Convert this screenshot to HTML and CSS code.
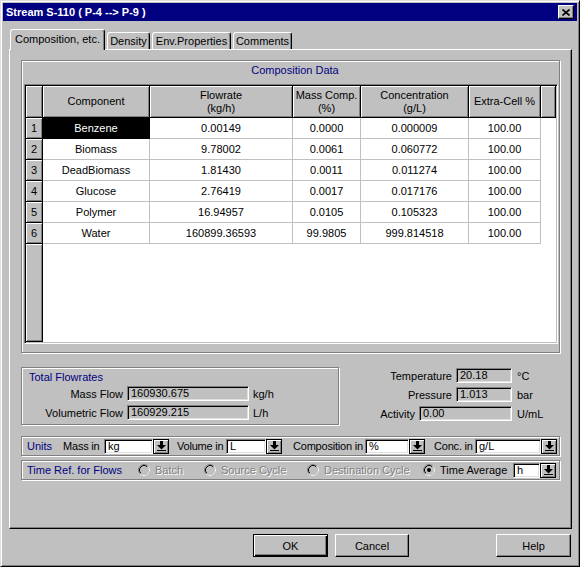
FILE: index.html
```html
<!DOCTYPE html>
<html lang="en">
<head>
  <meta charset="UTF-8" />
  <title>Stream S-110</title>
  <link rel="stylesheet" href="styles.css">
</head>
<body>
  <div class="window">
    <div class="titlebar">
      <span class="title">Stream S-110 ( P-4 --&gt; P-9 )</span>
      <button class="close-btn">
        <svg width="8" height="7" viewBox="0 0 8 7"><path d="M0.5 0.5L7.5 6.5M7.5 0.5L0.5 6.5" stroke="#000" stroke-width="1.6"/></svg>
      </button>
    </div>

    <div class="tabs">
      <div class="tab active tab-comp">Composition, etc.</div>
      <div class="tab tab-density">Density</div>
      <div class="tab tab-env">Env.Properties</div>
      <div class="tab tab-comments">Comments</div>
    </div>

    <div class="panel">
      <div class="group comp-group">
        <div class="group-title comp-title">Composition Data</div>
        <div class="grid">
          <div class="grid-row head">
            <div class="rh"></div>
            <div class="hc">Component</div>
            <div class="hc">Flowrate<br>(kg/h)</div>
            <div class="hc">Mass Comp.<br>(%)</div>
            <div class="hc">Concentration<br>(g/L)</div>
            <div class="hc">Extra-Cell %</div>
            <div class="hc"></div>
          </div>
          <div class="grid-row">
            <div class="rh">1</div>
            <div class="cell sel">Benzene</div>
            <div class="cell">0.00149</div>
            <div class="cell">0.0000</div>
            <div class="cell">0.000009</div>
            <div class="cell">100.00</div>
            <div class="cell blank"></div>
          </div>
          <div class="grid-row">
            <div class="rh">2</div>
            <div class="cell">Biomass</div>
            <div class="cell">9.78002</div>
            <div class="cell">0.0061</div>
            <div class="cell">0.060772</div>
            <div class="cell">100.00</div>
            <div class="cell blank"></div>
          </div>
          <div class="grid-row">
            <div class="rh">3</div>
            <div class="cell">DeadBiomass</div>
            <div class="cell">1.81430</div>
            <div class="cell">0.0011</div>
            <div class="cell">0.011274</div>
            <div class="cell">100.00</div>
            <div class="cell blank"></div>
          </div>
          <div class="grid-row">
            <div class="rh">4</div>
            <div class="cell">Glucose</div>
            <div class="cell">2.76419</div>
            <div class="cell">0.0017</div>
            <div class="cell">0.017176</div>
            <div class="cell">100.00</div>
            <div class="cell blank"></div>
          </div>
          <div class="grid-row">
            <div class="rh">5</div>
            <div class="cell">Polymer</div>
            <div class="cell">16.94957</div>
            <div class="cell">0.0105</div>
            <div class="cell">0.105323</div>
            <div class="cell">100.00</div>
            <div class="cell blank"></div>
          </div>
          <div class="grid-row">
            <div class="rh">6</div>
            <div class="cell">Water</div>
            <div class="cell">160899.36593</div>
            <div class="cell">99.9805</div>
            <div class="cell">999.814518</div>
            <div class="cell">100.00</div>
            <div class="cell blank"></div>
          </div>
          <div class="grid-rest">
            <div class="rh"></div>
          </div>
        </div>
      </div>

      <div class="flows">
        <div class="group total-group">
          <div class="group-title">Total Flowrates</div>
          <div class="flow-row first">
            <span class="flow-label">Mass Flow</span>
            <span class="field flow-field">160930.675</span>
            <span class="flow-unit">kg/h</span>
          </div>
          <div class="flow-row">
            <span class="flow-label">Volumetric Flow</span>
            <span class="field flow-field">160929.215</span>
            <span class="flow-unit">L/h</span>
          </div>
        </div>
        <div class="props">
          <div class="prop-row">
            <span class="prop-label">Temperature</span>
            <span class="field short">20.18</span>
            <span class="prop-unit">°C</span>
          </div>
          <div class="prop-row">
            <span class="prop-label">Pressure</span>
            <span class="field short">1.013</span>
            <span class="prop-unit">bar</span>
          </div>
          <div class="prop-row">
            <span class="prop-label">Activity</span>
            <span class="field long">0.00</span>
            <span class="prop-unit">U/mL</span>
          </div>
        </div>
      </div>

      <div class="group bar units-bar">
        <span class="bar-title w-units">Units</span>
        <span class="lbl w-mass">Mass in</span>
        <div class="combo">
          <span class="combo-edit e-mass">kg</span>
          <span class="combo-btn"><svg width="9" height="10" viewBox="0 0 9 10"><rect x="3" y="0" width="3" height="4"/><polygon points="0,4 9,4 4.5,8.5"/><rect x="0" y="9" width="9" height="1"/></svg></span>
        </div>
        <span class="lbl w-volume">Volume in</span>
        <div class="combo">
          <span class="combo-edit e-volume">L</span>
          <span class="combo-btn"><svg width="9" height="10" viewBox="0 0 9 10"><rect x="3" y="0" width="3" height="4"/><polygon points="0,4 9,4 4.5,8.5"/><rect x="0" y="9" width="9" height="1"/></svg></span>
        </div>
        <span class="lbl w-comp">Composition in</span>
        <div class="combo">
          <span class="combo-edit e-comp">%</span>
          <span class="combo-btn"><svg width="9" height="10" viewBox="0 0 9 10"><rect x="3" y="0" width="3" height="4"/><polygon points="0,4 9,4 4.5,8.5"/><rect x="0" y="9" width="9" height="1"/></svg></span>
        </div>
        <span class="lbl w-conc">Conc. in</span>
        <div class="combo">
          <span class="combo-edit e-conc">g/L</span>
          <span class="combo-btn"><svg width="9" height="10" viewBox="0 0 9 10"><rect x="3" y="0" width="3" height="4"/><polygon points="0,4 9,4 4.5,8.5"/><rect x="0" y="9" width="9" height="1"/></svg></span>
        </div>
      </div>

      <div class="group bar time-bar">
        <span class="bar-title w-time">Time Ref. for Flows</span>
        <label class="radio disabled r-batch">
          <svg width="12" height="12" viewBox="0 0 12 12"><circle cx="6" cy="6" r="5.5" fill="#c0c0c0" stroke="#808080"/><path d="M9.89 2.11A5.5 5.5 0 0 1 2.11 9.89" fill="none" stroke="#fff"/><path d="M2.82 9.18A4.5 4.5 0 0 1 9.18 2.82" fill="none" stroke="#000"/></svg>
          <span>Batch</span>
        </label>
        <label class="radio disabled r-source">
          <svg width="12" height="12" viewBox="0 0 12 12"><circle cx="6" cy="6" r="5.5" fill="#c0c0c0" stroke="#808080"/><path d="M9.89 2.11A5.5 5.5 0 0 1 2.11 9.89" fill="none" stroke="#fff"/><path d="M2.82 9.18A4.5 4.5 0 0 1 9.18 2.82" fill="none" stroke="#000"/></svg>
          <span>Source Cycle</span>
        </label>
        <label class="radio disabled r-dest">
          <svg width="12" height="12" viewBox="0 0 12 12"><circle cx="6" cy="6" r="5.5" fill="#c0c0c0" stroke="#808080"/><path d="M9.89 2.11A5.5 5.5 0 0 1 2.11 9.89" fill="none" stroke="#fff"/><path d="M2.82 9.18A4.5 4.5 0 0 1 9.18 2.82" fill="none" stroke="#000"/></svg>
          <span>Destination Cycle</span>
        </label>
        <label class="radio r-avg">
          <svg width="12" height="12" viewBox="0 0 12 12"><circle cx="6" cy="6" r="5.5" fill="#c0c0c0" stroke="#808080"/><path d="M9.89 2.11A5.5 5.5 0 0 1 2.11 9.89" fill="none" stroke="#fff"/><path d="M2.82 9.18A4.5 4.5 0 0 1 9.18 2.82" fill="none" stroke="#000"/><circle cx="6" cy="6" r="2" fill="#000"/></svg>
          <span>Time Average</span>
        </label>
        <div class="combo">
          <span class="combo-edit e-time">h</span>
          <span class="combo-btn"><svg width="9" height="10" viewBox="0 0 9 10"><rect x="3" y="0" width="3" height="4"/><polygon points="0,4 9,4 4.5,8.5"/><rect x="0" y="9" width="9" height="1"/></svg></span>
        </div>
      </div>
    </div>

    <div class="buttons">
      <button class="btn default">OK</button>
      <button class="btn cancel">Cancel</button>
      <button class="btn help">Help</button>
    </div>
  </div>
</body>
</html>
```

FILE: styles.css
```css
* {
  box-sizing: border-box;
}
body {
  margin: 0;
  background-color: #c0c0c0;
  font-family: "Liberation Sans", Arial, sans-serif;
  font-size: 11px;
  color: #000;
}
.window {
  width: 580px;
  height: 567px;
  background-color: #c0c0c0;
  border: 1px solid;
  border-color: #dfdfdf #000 #000 #dfdfdf;
  box-shadow: inset 1px 1px #fff, inset -1px -1px #808080;
  padding: 2px;
}

/* title bar */
.titlebar {
  height: 18px;
  background-color: #000080;
  display: flex;
  align-items: center;
  justify-content: space-between;
  padding: 0 3px 0 3px;
}
.title {
  color: #fff;
  font-weight: bold;
  font-size: 11px;
}
.close-btn {
  width: 16px;
  height: 14px;
  padding: 0;
  background-color: #c0c0c0;
  border: 1px solid;
  border-color: #fff #000 #000 #fff;
  box-shadow: inset -1px -1px #808080;
  display: flex;
  align-items: center;
  justify-content: center;
}

/* tabs */
.tabs {
  display: flex;
  align-items: flex-end;
  height: 20px;
  margin-top: 8px;
  padding-left: 7px;
}
.tab {
  height: 17px;
  background-color: #c0c0c0;
  border-top: 1px solid #fff;
  border-left: 1px solid #fff;
  border-right: 1px solid #000;
  box-shadow: inset -1px 0 #808080;
  border-radius: 3px 3px 0 0;
  text-align: center;
  line-height: 16px;
  white-space: nowrap;
}
.tab.active {
  height: 21px;
  margin-bottom: -1px;
  position: relative;
  z-index: 1;
  line-height: 19px;
}
.tab-comp { width: 95px; }
.tab-density { width: 43px; margin-left: 2px; }
.tab-env { width: 79px; margin-left: 2px; }
.tab-comments { width: 59px; margin-left: 2px; }

/* page panel */
.panel {
  margin-left: 6px;
  width: 563px;
  height: 480px;
  border: 1px solid;
  border-color: #fff #000 #000 #fff;
  box-shadow: inset -1px -1px #808080;
  padding: 10px 0 0 11px;
}
.group {
  border: 1px solid #808080;
  box-shadow: 1px 1px 0 #fff, inset 1px 1px 0 #fff;
}
.group-title {
  color: #000080;
  line-height: 13px;
}
.comp-group {
  width: 539px;
  height: 293px;
  padding-left: 2px;
}
.comp-title {
  height: 23px;
  padding-top: 3px;
  padding-left: 7px;
  text-align: center;
}

/* data grid */
.grid {
  width: 534px;
  height: 260px;
  border: 1px solid;
  border-color: #808080 #fff #fff #808080;
  box-shadow: inset 1px 1px #000, inset -1px -1px #c0c0c0;
  padding: 1px;
  background-color: #fff;
  display: flex;
  flex-direction: column;
}
.grid-row {
  display: grid;
  grid-template-columns: 17px 107px 143px 68px 108px 72px 15px;
  height: 21px;
}
.grid-row.head {
  height: 32px;
}
.hc,
.rh {
  background-color: #c0c0c0;
  border-right: 1px solid #000;
  border-bottom: 1px solid #000;
  box-shadow: inset 1px 1px #fff, inset -1px -1px #808080;
  display: flex;
  align-items: center;
  justify-content: center;
  text-align: center;
  line-height: 13px;
}
.cell {
  border-right: 1px solid #c0c0c0;
  border-bottom: 1px solid #c0c0c0;
  display: flex;
  align-items: center;
  justify-content: center;
  white-space: nowrap;
}
.cell.sel {
  background-color: #000;
  border-color: #000;
  color: #fff;
}
.cell.blank {
  border: none;
}
.grid-rest {
  flex: 1;
  display: grid;
  grid-template-columns: 17px;
}

/* flowrates and properties */
.flows {
  display: flex;
  width: 539px;
  margin-top: 14px;
}
.total-group {
  width: 318px;
  height: 58px;
  padding: 3px 0 0 7px;
}
.flow-row {
  display: flex;
  align-items: center;
  height: 15px;
  margin-top: 4px;
}
.flow-row.first {
  margin-top: 2px;
}
.flow-label {
  width: 94px;
  text-align: right;
  margin-right: 4px;
  white-space: nowrap;
}
.flow-unit {
  margin-left: 4px;
}
.field {
  height: 15px;
  background-color: #c0c0c0;
  border: 1px solid;
  border-color: #808080 #fff #fff #808080;
  box-shadow: inset 1px 1px #000, inset -1px -1px #dfdfdf;
  padding-left: 3px;
  line-height: 13px;
}
.flow-field { width: 122px; }
.field.short { width: 56px; }
.field.long { width: 93px; }
.props {
  flex: 1;
  margin-top: 1px;
  display: flex;
  flex-direction: column;
  gap: 4px;
}
.prop-row {
  display: flex;
  align-items: center;
  justify-content: flex-end;
  height: 15px;
}
.prop-label {
  margin-right: 4px;
}
.prop-unit {
  width: 48px;
  padding-left: 5px;
}

/* units and time reference bars */
.bar {
  width: 539px;
  height: 20px;
  display: flex;
  align-items: center;
  padding-left: 5px;
  white-space: nowrap;
}
.units-bar { margin-top: 11px; }
.time-bar { margin-top: 4px; }
.bar-title {
  color: #000080;
}
.lbl {
  letter-spacing: -0.2px;
}
.w-units { width: 36px; }
.w-mass { width: 41px; }
.w-volume { width: 49px; margin-left: 8px; }
.w-comp { width: 72px; margin-left: 11px; }
.w-conc { width: 41px; margin-left: 9px; }
.w-time { width: 111px; }
.combo {
  display: flex;
  height: 15px;
}
.combo-edit {
  height: 15px;
  background-color: #fff;
  border: 1px solid;
  border-color: #808080 #fff #fff #808080;
  box-shadow: inset 1px 1px #000, inset -1px -1px #dfdfdf;
  padding-left: 3px;
  line-height: 13px;
}
.e-mass { width: 49px; }
.e-volume { width: 40px; }
.e-comp { width: 44px; }
.e-conc { width: 66px; }
.e-time { width: 27px; }
.combo-btn {
  width: 16px;
  height: 15px;
  background-color: #c0c0c0;
  border: 1px solid #000;
  box-shadow: inset 1px 1px #fff, inset -1px -1px #808080;
  display: flex;
  align-items: center;
  justify-content: center;
}
.radio {
  display: flex;
  align-items: center;
}
.radio svg {
  margin-right: 5px;
  flex: none;
}
.radio.disabled span {
  color: #808080;
  text-shadow: 1px 1px 0 #fff;
}
.r-batch { width: 66px; }
.r-source { width: 103px; }
.r-dest { width: 116px; }
.r-avg { width: 90px; }

/* dialog buttons */
.buttons {
  display: flex;
  margin-top: 5px;
  padding-left: 250px;
}
.btn {
  width: 75px;
  height: 23px;
  padding: 0;
  font: inherit;
  color: #000;
  background-color: #c0c0c0;
  border: 1px solid;
  border-color: #fff #000 #000 #fff;
  box-shadow: inset -1px -1px #808080;
}
.btn.default {
  border-color: #000;
  box-shadow: inset 1px 1px #fff, inset -1px -1px #000, inset -2px -2px #808080;
}
.btn.cancel {
  width: 74px;
  margin-left: 7px;
}
.btn.help {
  margin-left: auto;
  margin-right: 6px;
}
```
